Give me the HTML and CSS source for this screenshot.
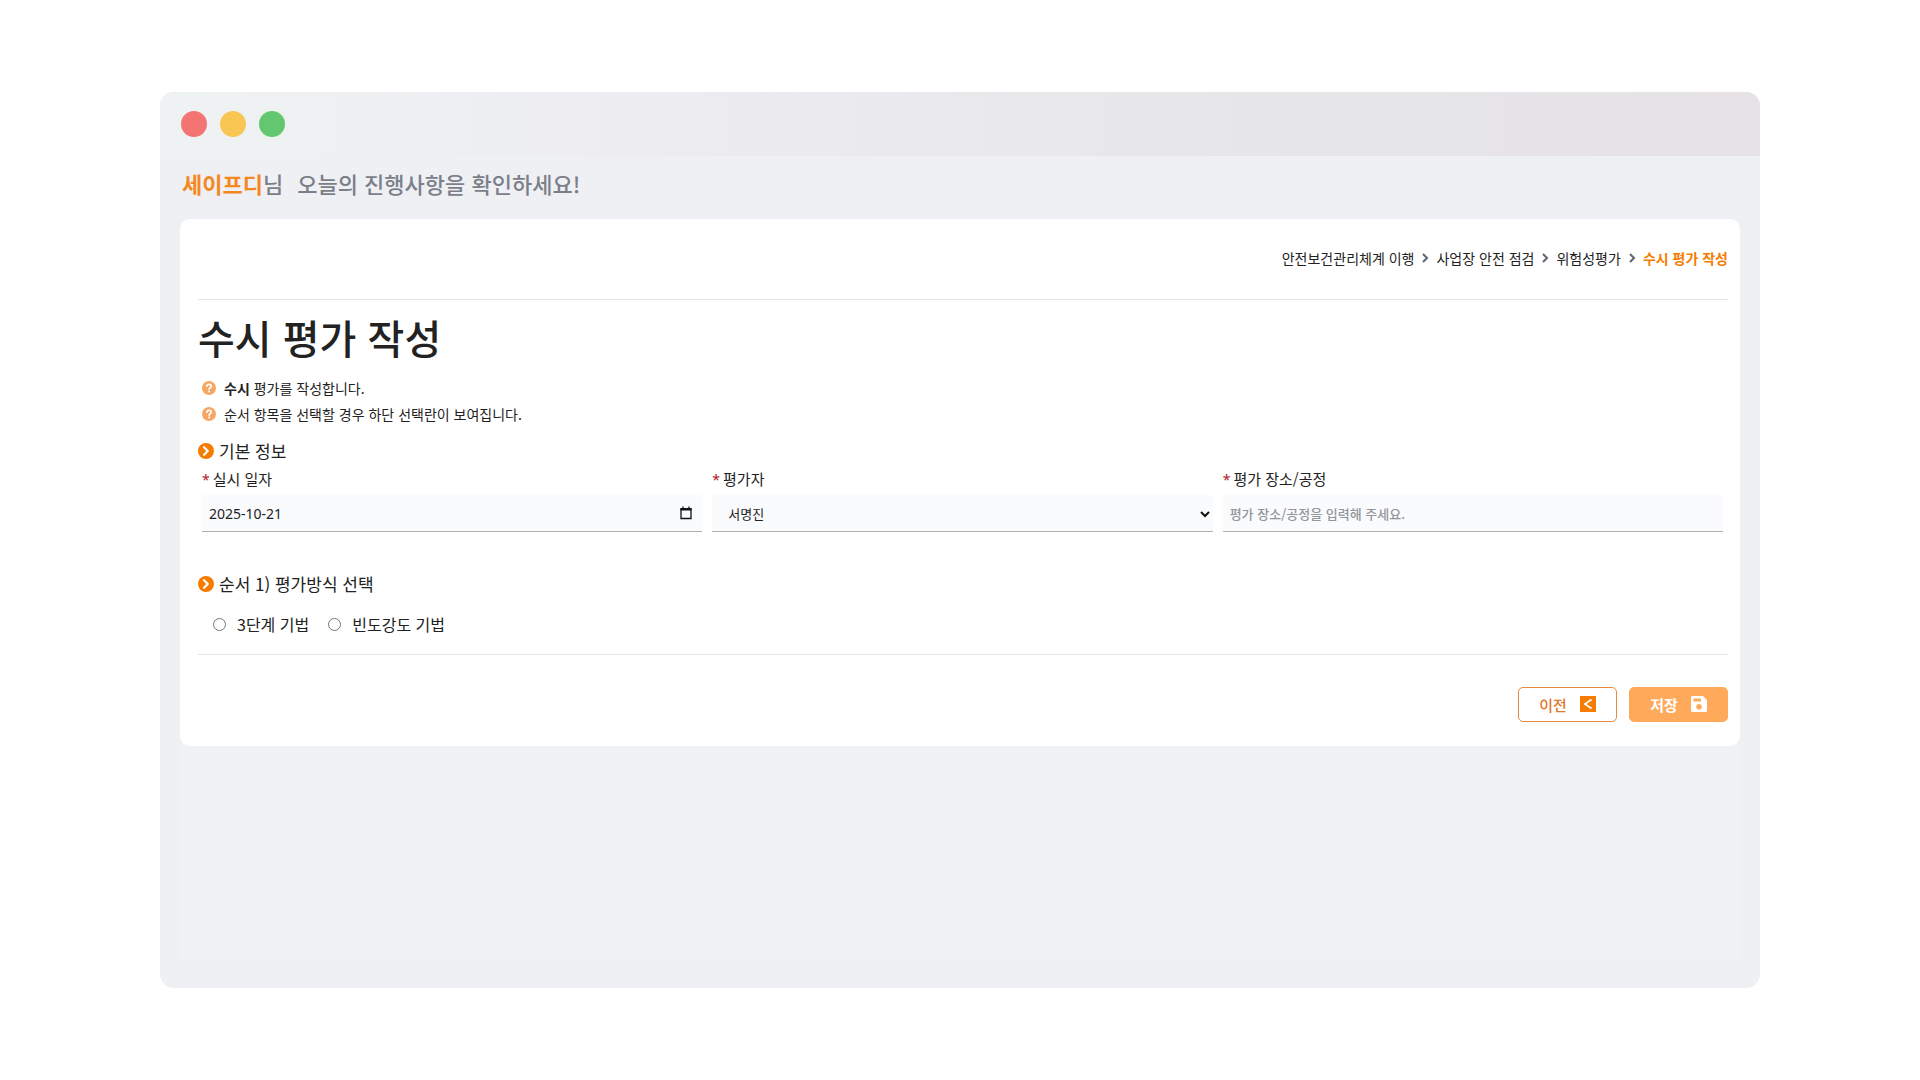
FILE: index.html
```html
<!DOCTYPE html>
<html lang="ko">
<head>
<meta charset="utf-8">
<meta name="viewport" content="width=device-width, initial-scale=1">
<title>수시 평가 작성</title>
<link rel="stylesheet" href="styles.css">
</head>
<body>
<svg class="sprite" aria-hidden="true">
  <symbol id="chevron" viewBox="0 0 8 10"><path d="M2 1l4 4-4 4" fill="none" stroke="currentColor" stroke-width="2"/></symbol>
  <symbol id="bullet" viewBox="0 0 16 16"><circle cx="8" cy="8" r="8" fill="currentColor"/><path d="M6 4.2L9.8 8 6 11.8" fill="none" stroke="#fff" stroke-width="2.2" stroke-linecap="round" stroke-linejoin="round"/></symbol>
  <symbol id="question" viewBox="0 0 14 14"><circle cx="7" cy="7" r="7" fill="currentColor"/><path d="M4.8 5.3C5 3.9 6 3.4 7.1 3.4c1.200 0 2.200.7 2.200 1.900C9.300 6.800 7.100 6.700 7.100 8.300" fill="none" stroke="#fff" stroke-width="1.600" stroke-linecap="round"/><circle cx="7.100" cy="10.500" r="1" fill="#fff"/></symbol>
</svg>
<div class="window">
  <div class="titlebar">
    <span class="dot dot-red"></span>
    <span class="dot dot-yellow"></span>
    <span class="dot dot-green"></span>
  </div>
  <header class="greeting">
    <p><strong>세이프디</strong>님</p>
    <p>오늘의 진행사항을 확인하세요!</p>
  </header>
  <div class="workspace">
    <main class="card">
      <nav class="breadcrumb" aria-label="경로">
        <a href="#">안전보건관리체계 이행</a>
        <svg class="chevron"><use href="#chevron"/></svg>
        <a href="#">사업장 안전 점검</a>
        <svg class="chevron"><use href="#chevron"/></svg>
        <a href="#">위험성평가</a>
        <svg class="chevron"><use href="#chevron"/></svg>
        <a class="current" href="#" aria-current="page">수시 평가 작성</a>
      </nav>
      <form class="form">
        <h1>수시 평가 작성</h1>
        <ul class="help">
          <li><svg><use href="#question"/></svg><span><b>수시</b> 평가를 작성합니다.</span></li>
          <li><svg><use href="#question"/></svg><span>순서 항목을 선택할 경우 하단 선택란이 보여집니다.</span></li>
        </ul>
        <section class="basic">
          <h2><svg><use href="#bullet"/></svg>기본 정보</h2>
          <div class="fields">
            <div class="field">
              <label for="date"><span class="required">*</span>실시 일자</label>
              <div class="control">
                <input id="date" class="date" type="text" value="2025-10-21">
                <svg class="calendar" viewBox="0 0 12 14"><path d="M1 3h10v9.500H1zM3 .5V3M9 .5V3" fill="none" stroke="currentColor" stroke-width="1.300"/><path d="M.5 2h11v2.500H.5z" fill="currentColor"/></svg>
              </div>
            </div>
            <div class="field">
              <label for="assessor"><span class="required">*</span>평가자</label>
              <div class="control">
                <select id="assessor"><option>서명진</option></select>
                <svg class="arrow" viewBox="0 0 10 7"><path d="M1 1l4 4 4-4" fill="none" stroke="currentColor" stroke-width="2"/></svg>
              </div>
            </div>
            <div class="field">
              <label for="place"><span class="required">*</span>평가 장소/공정</label>
              <div class="control">
                <input id="place" type="text" placeholder="평가 장소/공정을 입력해 주세요.">
              </div>
            </div>
          </div>
        </section>
        <section>
          <h2><svg><use href="#bullet"/></svg>순서 1) 평가방식 선택</h2>
          <div class="methods">
            <label><input type="radio" name="method">3단계 기법</label>
            <label><input type="radio" name="method">빈도강도 기법</label>
          </div>
        </section>
      </form>
      <div class="actions">
        <button class="button outline" type="button">이전
          <svg viewBox="0 0 16 16"><path d="M0 0h16v16H0z" fill="#f57c00"/><path d="M11.500 3.500L5 8l6.500 4.500" fill="none" stroke="#fff" stroke-width="1.800"/></svg>
        </button>
        <button class="button solid" type="button">저장
          <svg viewBox="0 0 16 16"><path fill="#fff" fill-rule="evenodd" d="M1.500 0H12l4 4v10.500a1.500 1.500 0 0 1-1.500 1.500h-13A1.500 1.500 0 0 1 0 14.500v-13A1.500 1.500 0 0 1 1.500 0zM2.500 2.500v3H10v-3zM8 8a2.800 2.800 0 1 0 0 5.600A2.800 2.800 0 0 0 8 8z"/></svg>
        </button>
      </div>
    </main>
  </div>
</div>
</body>
</html>
```
FILE: styles.css
```css
* { box-sizing: border-box; }

body {
  margin: 0;
  padding: 92px 160px;
  background: #fff;
  color: #222;
  font-family: "Noto Sans CJK KR", sans-serif;
  font-size: 14px;
}

h1, h2, p, ul { margin: 0; padding: 0; }
svg { flex: none; display: block; }
a { color: inherit; text-decoration: none; }
.sprite { position: absolute; width: 0; height: 0; }

.window {
  display: flex;
  flex-direction: column;
  min-height: calc(100vh - 184px);
  padding-bottom: 28px;
  border-radius: 14px;
  background: #eef0f4;
  overflow: hidden;
}

.titlebar {
  display: flex;
  align-items: center;
  gap: 13px;
  height: 64px;
  padding: 0 21px;
  background: linear-gradient(90deg, #eff2f3, #ededf1 30%, #e6e6e9 70%, #e6e2e6);
}
.dot { width: 26px; height: 26px; border-radius: 50%; }
.dot-red { background: #f47474; }
.dot-yellow { background: #f8c653; }
.dot-green { background: #62c76f; }

.greeting {
  display: flex;
  gap: 14px;
  padding: 11px 22px 20px;
  color: #7b7f89;
  font-size: 22px;
  font-weight: 500;
  line-height: 32px;
}
.greeting strong { color: #f5871f; font-weight: 700; }

.workspace {
  flex: 1;
  margin: 0 20px;
  background: #eef2f3;
}

.card {
  padding: 29px 12px 24px 18px;
  border-radius: 10px;
  background: #fff;
}

.breadcrumb {
  display: flex;
  justify-content: flex-end;
  align-items: center;
  gap: 7px;
  padding-bottom: 31px;
  border-bottom: 1px solid #e4e4e6;
  line-height: 20px;
}
.chevron { width: 8px; height: 10px; color: #5f6672; }
.breadcrumb .current { color: #f57c00; font-weight: 700; }

.form {
  padding: 9px 0 18px;
  border-bottom: 1px solid #e4e4e6;
}

h1 { font-size: 40px; font-weight: 500; line-height: 56px; }

.help { padding: 10px 4px; list-style: none; line-height: 26px; }
.help li { display: flex; align-items: center; gap: 8px; }
.help svg { width: 14px; height: 14px; color: #f7a765; }

h2 {
  display: flex;
  align-items: center;
  gap: 5px;
  font-size: 17px;
  font-weight: 400;
  line-height: 28px;
}
h2 svg { width: 16px; height: 16px; color: #f57c00; }

.basic { padding-bottom: 38px; }
.fields {
  display: grid;
  grid-template-columns: repeat(3, 1fr);
  gap: 10px;
  padding: 2px 5px 0 4px;
}
.field { display: grid; gap: 3px; }
.field label { font-size: 15px; line-height: 24px; }
.required {
  margin-right: 3px;
  color: #b3202a;
  font-family: "Noto Sans", sans-serif;
  font-size: 14px;
}

.control { position: relative; }
.control input,
.control select {
  display: block;
  width: 100%;
  height: 37px;
  padding: 0 7px;
  border: 0;
  border-bottom: 1px solid #aeb2b5;
  border-radius: 0;
  background: #fafbfd;
  color: #222;
  font: inherit;
  font-size: 13px;
  appearance: none;
}
.control select { padding-left: 16px; }
.control .date { font-family: "Noto Sans", sans-serif; font-size: 14px; }
.control input::placeholder { color: #92969b; font-weight: 500; opacity: 1; }
.calendar, .arrow { position: absolute; pointer-events: none; color: #111; }
.calendar { top: 11px; right: 10px; width: 12px; height: 14px; }
.arrow { top: 16px; right: 3px; width: 10px; height: 7px; }

.methods {
  display: flex;
  gap: 19px;
  padding: 14px 15px 0;
  font-size: 16px;
  line-height: 24px;
}
.methods label { display: flex; align-items: center; gap: 11px; }
.methods input { width: 13px; height: 13px; margin: 0; }

.actions {
  display: flex;
  justify-content: flex-end;
  gap: 12px;
  padding-top: 32px;
}
.button {
  display: flex;
  justify-content: center;
  align-items: center;
  gap: 13px;
  width: 99px;
  height: 35px;
  padding: 0 0 1px;
  border: 1px solid #e88a3c;
  border-radius: 5px;
  font: 500 15px "Noto Sans CJK KR", sans-serif;
}
.button svg { width: 16px; height: 16px; }
.outline { background: #fff; color: #e0782a; }
.solid { border-color: #ffaa5b; background: #ffaa5b; color: #fff; font-weight: 700; }
```
